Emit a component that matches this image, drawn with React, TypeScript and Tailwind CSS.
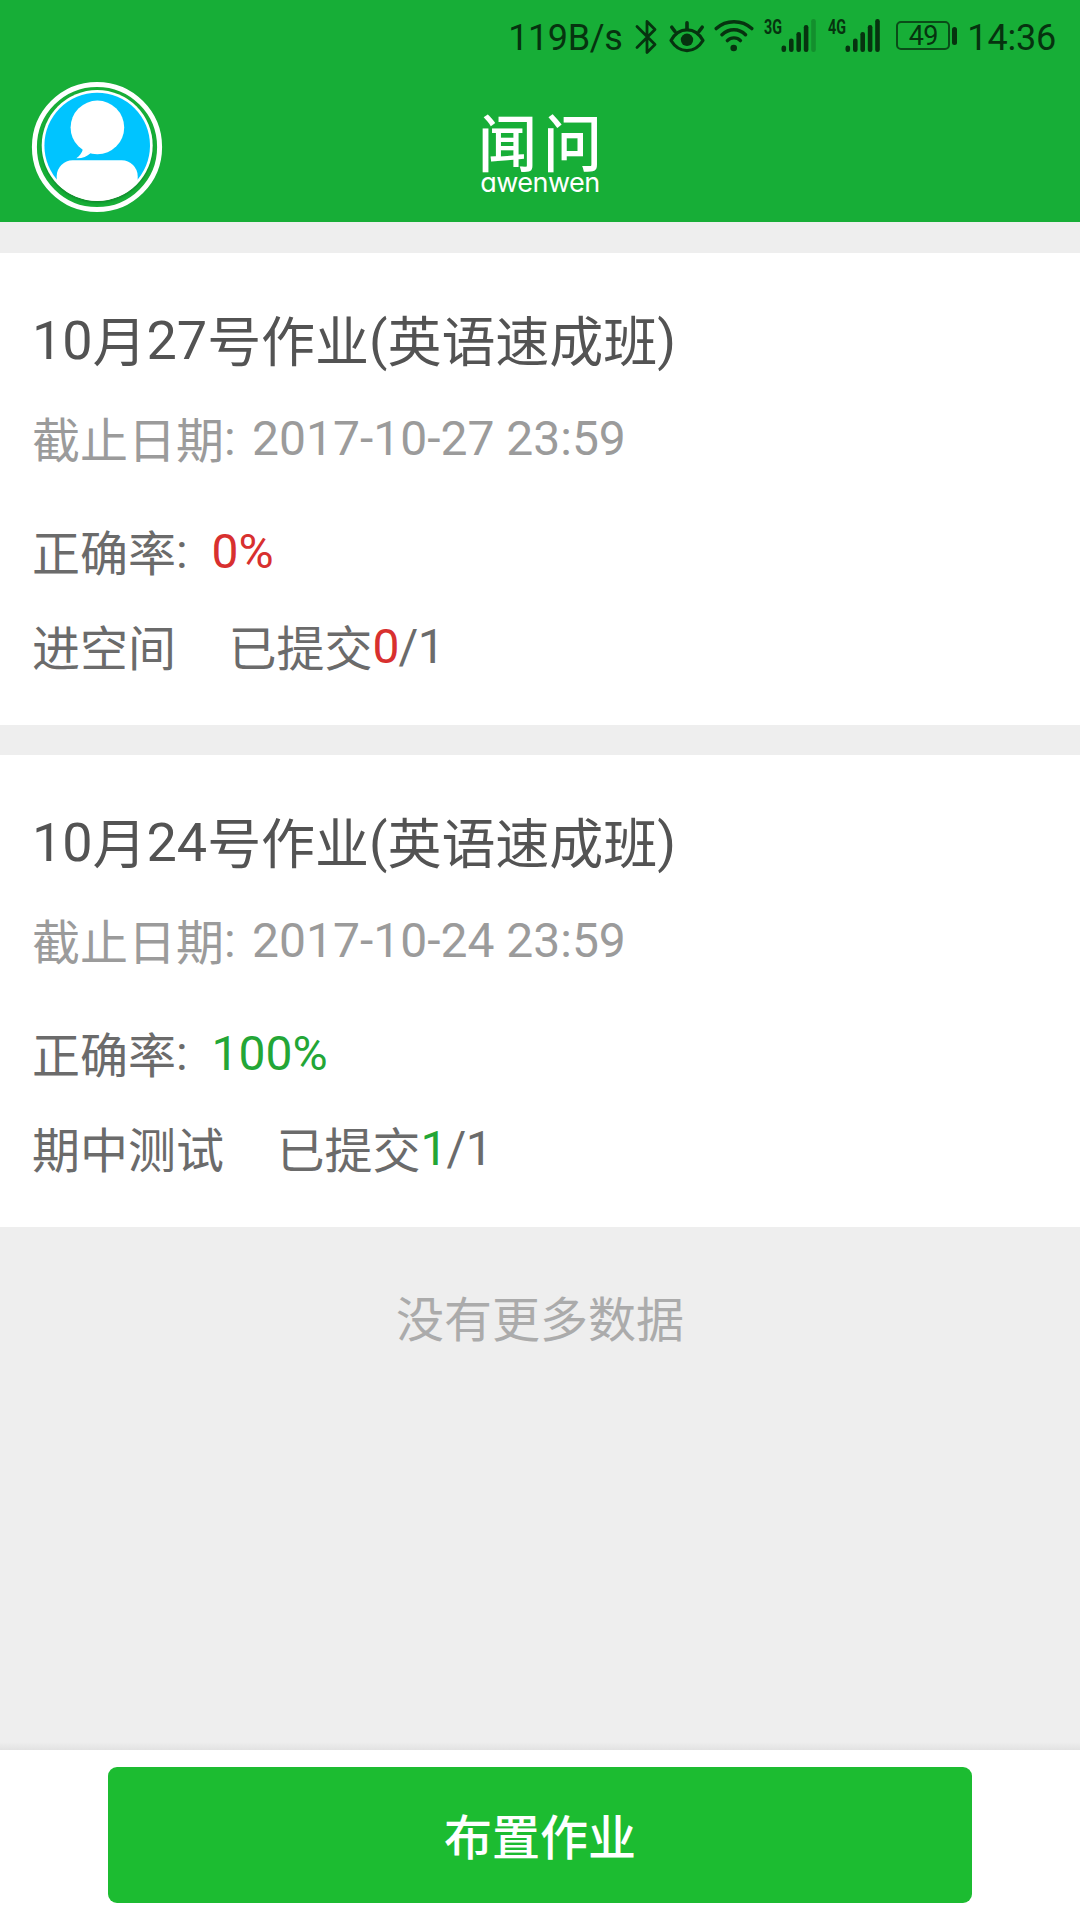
import React from 'react';

const INK = '#06330f';

function BluetoothIcon() {
  return (
    <svg width="22" height="36" viewBox="0 0 22 36" fill="none" stroke={INK} strokeWidth="2.8" strokeLinejoin="round" strokeLinecap="round">
      <path d="M2 7.5 20 25.5 12 33.5V2.500L20 10.5 2 28.5" />
    </svg>
  );
}

function EyeIcon() {
  return (
    <svg width="36" height="32" viewBox="0 0 36 32" fill="none" stroke={INK} strokeWidth="3.2" strokeLinecap="round">
      <path d="M2 19.5C6 12 12 8.8 18 8.8S30 12 34 19.5C30 26 24 29.6 18 29.6S6 26 2 19.5Z" strokeLinejoin="round" />
      <circle cx="18" cy="18.8" r="6.2" fill={INK} stroke="none" />
      <path d="M18 1.8V8M2.8 6.2 6 10.5M33.2 6.2 30 10.5" strokeWidth="3.6" />
    </svg>
  );
}

function WifiIcon() {
  return (
    <svg width="40" height="32" viewBox="0 0 40 32" fill="none" stroke={INK} strokeWidth="3.4" strokeLinecap="round">
      <path d="M2.2 8.6C12 -.6 28 -.6 37.8 8.6M8 14.7C15 8 25 8 31.5 14.7M13.4 20.6C17 17 23 17 26.4 20.6" />
      <circle cx="19.7" cy="28" r="3.3" fill={INK} stroke="none" />
    </svg>
  );
}

function Signal({ label, full }: { label: string; full: boolean }) {
  const bars = [
    { x: 17.5, y: 26.5 },
    { x: 25, y: 19.5 },
    { x: 32.4, y: 13 },
    { x: 39.8, y: 6 },
    { x: 47.2, y: 0 },
  ];
  return (
    <svg width="53" height="33" viewBox="0 0 53 33" className="overflow-visible">
      <text x="0" y="15" fontFamily="Roboto" fontWeight="700" fontSize="20.5" textLength="18" lengthAdjust="spacingAndGlyphs" fill={INK}>
        {label}
      </text>
      {bars.map((b, i) => (
        <rect key={b.x} x={b.x} y={b.y} width="4.6" height={33 - b.y} rx="2.2" fill={INK} opacity={!full && i === 4 ? 0.25 : 1} />
      ))}
    </svg>
  );
}

function StatusBar() {
  return (
    <div className="flex h-[72px] items-start justify-end pr-[24px] text-[36px] leading-[42px] text-[#06330f]">
      <span className="mt-[17px] tracking-[-0.4px]">119B/s</span>
      <div className="mt-[18.5px] ml-[13px]"><BluetoothIcon /></div>
      <div className="mt-[20.5px] ml-[12px]"><EyeIcon /></div>
      <div className="mt-[19.5px] ml-[9px]"><WifiIcon /></div>
      <div className="mt-[19px] ml-[10px]"><Signal label="3G" full={false} /></div>
      <div className="mt-[19px] ml-[11px]"><Signal label="4G" full /></div>
      <div className="mt-[21px] ml-[15px] flex items-center gap-[2px]">
        <div className="flex h-[29px] w-[54px] items-center justify-center rounded-[5px] border-2 border-[#0a4c18] pt-[1px] text-[27px] leading-[27px] tracking-[-0.5px]">49</div>
        <div className="h-[18px] w-[5px] rounded-full bg-[#06330f]" />
      </div>
      <span className="mt-[17px] ml-[10px] tracking-[-0.2px]">14:36</span>
    </div>
  );
}

function Avatar() {
  return (
    <svg width="132" height="132" viewBox="31 80.5 132 132">
      <defs>
        <clipPath id="face"><circle cx="97.2" cy="145" r="55.3" /></clipPath>
        <filter id="soft"><feGaussianBlur stdDeviation="1.5" /></filter>
      </defs>
      <circle cx="97" cy="146.5" r="62.6" fill="none" stroke="#fff" strokeWidth="5" />
      <circle cx="97.2" cy="146.8" r="55" fill="#0f7f26" filter="url(#soft)" />
      <circle cx="97.2" cy="145" r="55.5" fill="#fff" />
      <circle cx="97.2" cy="145" r="52.8" fill="#00c4ff" />
      <g clipPath="url(#face)" fill="#fff">
        <circle cx="97.4" cy="126.9" r="26.8" />
        <path d="M83 148.5C82 152.5 79.5 155.5 76.3 157.7C82 158 87 156 90.5 152.7Z" />
        <rect x="56.7" y="159.7" width="81" height="60" rx="16" />
      </g>
    </svg>
  );
}

function Header() {
  return (
    <header className="h-[222px] bg-[#17ae37]">
      <StatusBar />
      <div className="grid h-[150px] grid-cols-3">
        <div className="pt-[8.5px] pl-[31px]"><Avatar /></div>
        <div className="flex flex-col items-center pt-[41px] whitespace-nowrap text-white">
          <div className="mr-[-6px] scale-y-105 font-['Noto_Sans_CJK_SC',sans-serif] text-[59px] leading-[56px] font-medium tracking-[6px]">闻问</div>
          <div className="font-[Inter,sans-serif] text-[27px] leading-[27px] tracking-[-0.5px] [font-feature-settings:'cv11']">awenwen</div>
        </div>
      </div>
    </header>
  );
}

/** Chinese run, lowered slightly so it sits centred against Roboto digits. */
function Zh({ children }: { children: React.ReactNode }) {
  return <span className="align-[-2.5px] leading-none">{children}</span>;
}

interface Homework {
  title: React.ReactNode;
  deadline: string;
  rate: string;
  lesson: string;
  submitted: number;
  total: number;
  accent: string;
}

const HOMEWORK: Homework[] = [
  {
    title: <>10<Zh>月</Zh>27<Zh>号作业</Zh>(<Zh>英语速成班</Zh>)</>,
    deadline: '2017-10-27 23:59',
    rate: '0%',
    lesson: '进空间',
    submitted: 0,
    total: 1,
    accent: 'text-[#d8302f]',
  },
  {
    title: <>10<Zh>月</Zh>24<Zh>号作业</Zh>(<Zh>英语速成班</Zh>)</>,
    deadline: '2017-10-24 23:59',
    rate: '100%',
    lesson: '期中测试',
    submitted: 1,
    total: 1,
    accent: 'text-[#23a636]',
  },
];

function HomeworkCard({ item }: { item: Homework }) {
  return (
    <section className="h-[472px] bg-white px-[32px] pt-[52px] text-[48px] leading-[64px] whitespace-pre text-[#6b6b6b]">
      <h2 className="text-[54px] leading-[72px] tracking-[-0.05px] text-[#535353]">{item.title}</h2>
      <p className="mt-[30px] text-[#9b9b9b]"><Zh>截止日期</Zh>: <span className="ml-[4.5px]">{item.deadline}</span></p>
      <p className="mt-[49px]"><Zh>正确率</Zh>:{'  '}<span className={item.accent}>{item.rate}</span></p>
      <p className="mt-[31px]">
        <Zh>{item.lesson}</Zh>
        <span className="ml-[52.5px]">
          <Zh>已提交</Zh><span className={item.accent}>{item.submitted}</span>
          <span className="ml-[-1px] tracking-[-0.5px]">/{item.total}</span>
        </span>
      </p>
    </section>
  );
}

export default function App() {
  return (
    <div className="flex h-[1920px] w-[1080px] flex-col overflow-hidden bg-[#eeeeee] font-[Roboto,'Noto_Sans_CJK_SC',sans-serif]">
      <Header />
      <main className="flex flex-1 flex-col gap-[30px] pt-[31px]">
        {HOMEWORK.map((item) => <HomeworkCard key={item.deadline} item={item} />)}
        <p className="mt-[32px] text-center text-[48px] leading-[64px] text-[#ababab]">没有更多数据</p>
      </main>
      <div className="h-[8px] bg-linear-to-b from-[#eeeeee] to-[#e2e2e2]" />
      <footer className="h-[170px] bg-white px-[108px] pt-[17px]">
        <button className="h-[136px] w-full rounded-[9px] bg-[#1cbc31] pt-[7px] text-[48px] leading-[64px] font-medium text-white">布置作业</button>
      </footer>
    </div>
  );
}
